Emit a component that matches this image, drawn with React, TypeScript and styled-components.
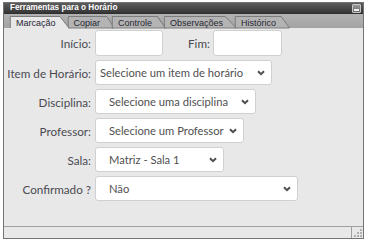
import React from 'react';
import styled, { createGlobalStyle } from 'styled-components';

const GlobalStyle = createGlobalStyle`
  html, body {
    margin: 0;
    padding: 0;
    background: #ffffff;
  }
  body {
    font-family: Lato, "Liberation Sans", sans-serif;
  }
`;

const Window = styled.div`
  margin: 2px 0 0 3px;
  width: 361px;
  height: 237px;
  box-sizing: border-box;
  border: 1px solid #747474;
  display: flex;
  flex-direction: column;
  background: #e8e8e8;
`;

const TitleBar = styled.div`
  height: 10px;
  display: flex;
  align-items: center;
  justify-content: space-between;
  padding: 0 2px 0 6px;
  background: linear-gradient(#5c5c5c, #363636);
  border-bottom: 1px solid #2e2e2e;
`;

const TitleText = styled.span`
  font-family: "Liberation Sans", Arial, sans-serif;
  font-weight: bold;
  font-size: 8.2px;
  line-height: 10px;
  color: #ffffff;
`;

const MinButton = styled.div`
  width: 7px;
  height: 6px;
  border: 1px solid #c8c8c8;
  border-radius: 1px;
  background: linear-gradient(#9a9a9a, #6a6a6a);
  display: flex;
  align-items: flex-end;
  justify-content: center;
  padding-bottom: 1px;
  box-sizing: content-box;
`;

const MinDash = styled.div`
  width: 5px;
  height: 2px;
  background: #f2f2f2;
`;

const TabStrip = styled.div`
  height: 14px;
  display: flex;
  align-items: flex-end;
  padding-left: 6px;
  background: linear-gradient(#b3b3b3, #a3a3a3);
`;

const Tab = styled.div<{ $active?: boolean }>`
  position: relative;
  height: 12px;
  margin-left: -2px;
  padding: 0 14px 0 6px;
  display: flex;
  align-items: center;
  font-family: "Liberation Sans", Arial, sans-serif;
  font-size: 9px;
  color: #262633;
  z-index: ${(p) => (p.$active ? 2 : 1)};

  &:first-child {
    margin-left: 0;
  }
`;

const TabShape = styled.svg`
  position: absolute;
  left: 0;
  top: 0;
  width: 100%;
  height: 100%;
  overflow: visible;
`;

const TabLabel = styled.span`
  position: relative;
  line-height: 12px;
  padding-top: 1px;
`;

const Content = styled.div`
  flex: 1;
  padding-top: 2px;
  display: grid;
  grid-template-columns: 87px auto;
  column-gap: 4px;
  row-gap: 4px;
  align-content: start;
  justify-items: start;
`;

const Label = styled.label`
  justify-self: end;
  align-self: center;
  font-size: 11.7px;
  color: #4a4a52;
  white-space: nowrap;
`;

const InlineRow = styled.div`
  display: flex;
  align-items: center;
`;

const TextBox = styled.div<{ $w: number }>`
  width: ${(p) => p.$w}px;
  height: 26px;
  box-sizing: border-box;
  background: #ffffff;
  border: 1px solid #d0d0d0;
  border-radius: 3px;
`;

const InlineLabel = styled.label`
  font-size: 11.7px;
  color: #4a4a52;
  margin: 0 3px 0 25px;
`;

const SelectBox = styled.div<{ $w: number; $pad: number }>`
  width: ${(p) => p.$w}px;
  height: 25px;
  box-sizing: border-box;
  background: #ffffff;
  border: 1px solid #d0d0d0;
  border-radius: 3px;
  display: flex;
  align-items: center;
  justify-content: space-between;
  padding: 0 6px 0 ${(p) => p.$pad}px;
  font-size: 11.2px;
  color: #505050;
  white-space: nowrap;
`;

const StatusBar = styled.div`
  height: 11px;
  border-top: 1px solid #a0a0a0;
  display: flex;
  justify-content: flex-end;
`;

const Grip = styled.div`
  width: 11px;
  border-left: 1px solid #a0a0a0;
  display: flex;
  align-items: flex-end;
  justify-content: flex-end;
`;

const Chevron = () => (
  <svg width="8" height="6" viewBox="0 0 8 6">
    <polyline points="1,1.2 4,4.2 7,1.2" fill="none" stroke="#4f4f4f" strokeWidth="2" />
  </svg>
);

const tabs = ['Marcação', 'Copiar', 'Controle', 'Observações', 'Histórico'];

const TabItem: React.FC<{ label: string; active?: boolean }> = ({ label, active }) => (
  <Tab $active={active}>
    <TabShape viewBox="0 0 100 12" preserveAspectRatio="none">
      <path
        d={active ? 'M0.5,12 L0.5,0.5 L84,0.5 L99,12' : 'M0.5,12 L0.5,0.5 L84,0.5 L99,12 Z'}
        fill={active ? '#e8e8e8' : '#b4b4b4'}
        stroke="#7c7c7c"
        strokeWidth="1"
        vectorEffect="non-scaling-stroke"
      />
    </TabShape>
    <TabLabel>{label}</TabLabel>
  </Tab>
);

const selects = [
  { label: 'Item de Horário:', value: 'Selecione um item de horário', w: 177, pad: 4 },
  { label: 'Disciplina:', value: 'Selecione uma disciplina', w: 161, pad: 13 },
  { label: 'Professor:', value: 'Selecione um Professor', w: 149, pad: 13 },
  { label: 'Sala:', value: 'Matriz - Sala 1', w: 129, pad: 13 },
  { label: 'Confirmado ?', value: 'Não', w: 203, pad: 13 },
];

export default function App() {
  return (
    <>
      <GlobalStyle />
      <Window>
        <TitleBar>
          <TitleText>Ferramentas para o Horário</TitleText>
          <MinButton>
            <MinDash />
          </MinButton>
        </TitleBar>
        <TabStrip>
          {tabs.map((t, i) => (
            <TabItem key={t} label={t} active={i === 0} />
          ))}
        </TabStrip>
        <Content>
          <Label>Início:</Label>
          <InlineRow>
            <TextBox $w={68} />
            <InlineLabel>Fim:</InlineLabel>
            <TextBox $w={69} />
          </InlineRow>
          {selects.map((s) => (
            <React.Fragment key={s.label}>
              <Label>{s.label}</Label>
              <SelectBox $w={s.w} $pad={s.pad}>
                <span>{s.value}</span>
                <Chevron />
              </SelectBox>
            </React.Fragment>
          ))}
        </Content>
        <StatusBar>
          <Grip>
            <svg width="10" height="10" viewBox="0 0 10 10">
              {[
                [7, 1], [7, 4], [4, 4], [7, 7], [4, 7], [1, 7],
              ].map(([x, y]) => (
                <rect key={`${x}-${y}`} x={x} y={y} width="2" height="2" fill="#b0b0b0" />
              ))}
            </svg>
          </Grip>
        </StatusBar>
      </Window>
    </>
  );
}
